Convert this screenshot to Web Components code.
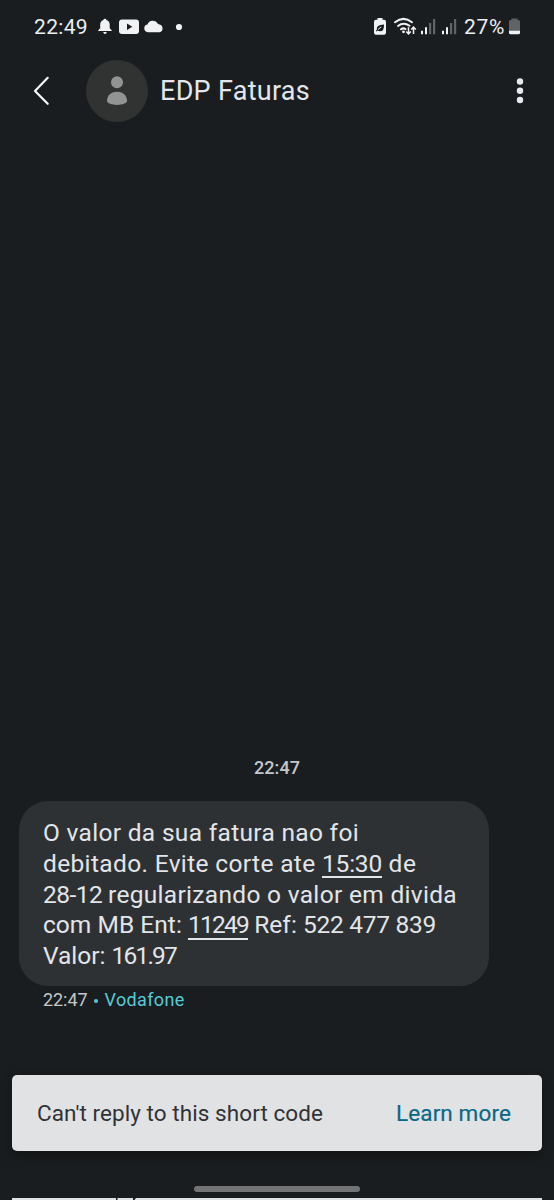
<!DOCTYPE html>
<html lang="pt">
<head>
<meta charset="utf-8">
<title>EDP Faturas</title>
<style>
html,body{margin:0;background:#1a1d1f}
body{font-family:Roboto,"Liberation Sans",sans-serif}
</style>
</head>
<body>
<sms-screen></sms-screen>
<script>
const define = (name, html, init) => customElements.define(name, class extends HTMLElement {
  connectedCallback() {
    if (this.shadowRoot) return;
    const t = document.createElement('template');
    t.innerHTML = html;
    this.attachShadow({mode: 'open'}).append(t.content.cloneNode(true));
    if (init) init.call(this);
  }
});

// A run of text tracked so that it fills the width given in its "w" attribute.
define('text-run', `<style>:host{display:inline-block;white-space:pre;line-height:inherit}
:host([link]){background:linear-gradient(currentColor,currentColor) 0 27.200px/100% 2px no-repeat}
span{display:inline-block}</style><span><slot></slot></span>`, function () {
  const w = parseFloat(this.getAttribute('w'));
  const natural = this.shadowRoot.querySelector('span').getBoundingClientRect().width;
  this.style.letterSpacing = (w - natural) / this.textContent.length + 'px';
  this.style.width = w + 'px';
});

define('status-bar', `<style>
:host{display:flex;box-sizing:border-box;height:54px;padding:0 34px;color:#eceef0;font-size:21px;line-height:54px}
svg{display:block;height:54px;flex:none}
</style>
<text-run w="54">22:49</text-run>
<svg width="102" height="54" viewBox="88 0 102 54" fill="#f1f2f3">
<path d="M105 18.800q1.300 0 1.500 1.300 3.200 1 3.200 4.500v3.700l2 2v.8H98.200v-.8l2-2v-3.700q0-3.500 3.200-4.500.2-1.300 1.600-1.300zM103.200 32h3.600q-.3 1.900-1.800 1.900T103.200 32z"/>
<path fill-rule="evenodd" d="M122 19.500h14q3 0 3 3v8.500q0 3-3 3h-14q-3 0-3-3v-8.500q0-3 3-3zm5 4.100v6.400l5.300-3.200z"/>
<path d="M147.800 32.200a3.900 3.900 0 0 1-.4-7.700 5.900 5.900 0 0 1 10.500-.8 5 5 0 0 1 1.600.9 3.900 3.900 0 0 1 0 7.600z"/>
<circle cx="179" cy="27" r="3.100"/>
</svg>
<svg width="90" height="54" viewBox="373 0 90 54" style="margin-left:auto">
<path fill="#f1f2f3" d="M377.500 18h5v1.800h1.500q2 0 2 2v11q0 2-2 2h-8q-2 0-2-2v-11q0-2 2-2h1.500z"/>
<path fill="#1a1d1f" d="M384 24.400q.5 6.800-4.200 6.800-1.300 0-2.100-.7l-1.200 1-.7-.8 1.100-1q-1.200-4.800 7.100-5.300z"/><path d="M378 29.500l3.300-2.600" stroke="#f1f2f3"/>
<g fill="none" stroke="#f1f2f3" stroke-width="2" stroke-linecap="round"><path d="M395 22.200q8.500-6.700 17 0M398 26q5.500-4.400 11.500-.2M401 29.300q2.200-1.700 4.500-.3"/></g>
<circle cx="403.500" cy="31.800" r="1.400" fill="#f1f2f3"/>
<g fill="none" stroke="#f1f2f3" stroke-width="1.500"><path d="M408.500 27.300v6.500m-2.300-2.300 2.300 2.400 2.300-2.400M413.500 34v-6.800m-2.300 2.400 2.300-2.400 2.300 2.400"/></g>
<g fill="#f1f2f3"><path d="M421 30.800h2v3.400h-2zM425 27.200h2v7h-2zM442 30.800h2v3.400h-2zM446 27.200h2v7h-2z"/><path fill="#606466" d="M429 23h2.200v11.200H429zM433 19h2.200v15.200H433zM450 23h2.200v11.200H450zM454 19h2.200v15.200H454z"/></g>
</svg>
<text-run w="41" style="margin-left:1px">27%</text-run>
<svg width="16" height="54" viewBox="505 0 16 54" style="margin-right:-1px"><path fill="#606366" d="M511.500 18.500h6V20h1q1.500 0 1.500 1.500V31h-11v-9.500q0-1.500 1.500-1.500h1z"/><path fill="#f1f2f3" d="M509 30.800h11v2q0 1.500-1.500 1.500h-8q-1.500 0-1.500-1.500z"/></svg>`);

define('contact-bar', `<style>
:host{display:flex;align-items:center;box-sizing:border-box;height:74px;padding:0 24px 0 26px}
.back{margin-right:28px}svg{display:block;flex:none}
h1{margin:0 auto 0 12px;font-size:27px;font-weight:400;line-height:40px;color:#e3e6ea}
</style>
<svg class="back" width="32" height="40" viewBox="26 71 32 40"><path d="M47.700 77.800L35 91l12.700 12.800" fill="none" stroke="#f5f6f7" stroke-width="2.200" stroke-linecap="round" stroke-linejoin="round"/></svg>
<svg width="62" height="62" viewBox="86 60 62 62"><circle cx="117" cy="91" r="31" fill="#313232"/><g fill="#929494"><circle cx="117" cy="82.300" r="6"/><path d="M107 100.800c0-12.200 20-12.200 20 0 0 5.500-20 5.500-20 0z"/></g></svg>
<h1><slot></slot></h1>
<svg width="20" height="40" viewBox="510 71 20 40" fill="#e5eaf0"><circle cx="520" cy="81.500" r="3.200"/><circle cx="520" cy="90.800" r="3.200"/><circle cx="520" cy="100" r="3.200"/></svg>`);

define('message-bubble', `<style>
:host{display:block;box-sizing:border-box;width:470.500px;height:185px;margin-left:18.500px;padding:17px 24px 0 24.500px;border-radius:29px;background:#2e3133;color:#e3e5e8;font-size:24.500px;line-height:30.800px}
</style><slot></slot>`);
define('message-line', `<style>:host{display:flex;height:30.800px}</style><slot></slot>`);
define('message-meta', `<style>:host{display:flex;align-items:center;padding-left:43px;height:28px;line-height:28px;font-size:18px;color:#c5c8ca}
i{width:4.600px;height:4.600px;border-radius:50%;margin:2px 6.500px 0 6px;background:#55cbd7}.c{color:#55cbd7}</style>
<text-run w="44.500">22:47</text-run><i></i><text-run class="c" w="80">Vodafone</text-run>`);

define('notice-bar', `<style>:host{display:flex;align-items:center;justify-content:space-between;box-sizing:border-box;height:76px;margin:0 12px;padding:0 31px 1px 25px;border-radius:5px;background:#e1e2e4;color:#303236;font-size:22.500px;box-shadow:0 5px 12px #0005}
.a{color:#096987;-webkit-text-stroke:.2px #096987}</style>
<text-run w="286">Can't reply to this short code</text-run><text-run class="a" w="115">Learn more</text-run>`);

define('home-handle', `<style>:host{display:flex;flex-direction:column;align-items:center;padding-top:34.500px}
.h{flex:none;width:166px;height:6.500px;border-radius:4px;background:#737475}
svg{display:block;flex:none;margin-top:5px}</style><div class="h"></div>
<svg width="530" height="3" viewBox="12 1197 530 3"><path fill="#e1e2e4" d="M12 1198h530v2H12z"/><path fill="#1a1d1f" d="M116 1198h1.500v2H116zM133 1198h3l-1.500 2H133z"/></svg>`);

define('sms-screen', `<style>
:host{display:flex;flex-direction:column;width:554px;height:1200px;overflow:hidden;background:#1a1d1f}
.day{margin-top:auto;display:flex;justify-content:center;height:24px;line-height:24px;font-size:18px;font-weight:500;color:#c5c8ca;margin-bottom:21px}
message-meta{margin-bottom:61px}
home-handle{height:49px;box-sizing:border-box}
</style>
<status-bar></status-bar>
<contact-bar><text-run w="150">EDP Faturas</text-run></contact-bar>
<div class="day"><text-run w="46">22:47</text-run></div>
<message-bubble>
<message-line><text-run w="316">O valor da sua fatura nao foi</text-run></message-line>
<message-line><text-run w="279">debitado. Evite corte ate </text-run><text-run link w="60">15:30</text-run><text-run w="34.500"> de</text-run></message-line>
<message-line><text-run w="65">28-12 </text-run><text-run w="349">regularizando o valor em divida</text-run></message-line>
<message-line><text-run w="145">com MB Ent: </text-run><text-run link w="60">11249</text-run><text-run w="55"> Ref: </text-run><text-run w="133">522 477 839</text-run></message-line>
<message-line><text-run w="68.500">Valor: </text-run><text-run w="64.500">161.97</text-run></message-line>
</message-bubble>
<message-meta></message-meta>
<notice-bar></notice-bar>
<home-handle></home-handle>`);
</script>
</body>
</html>
